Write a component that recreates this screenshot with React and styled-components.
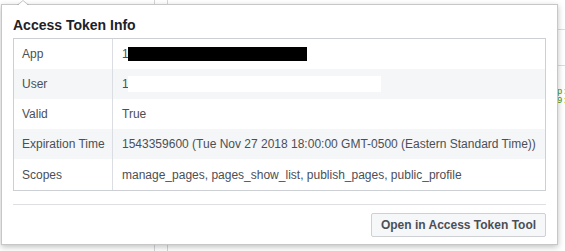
import React from 'react'
import styled, { createGlobalStyle } from 'styled-components'

const GlobalStyle = createGlobalStyle`
  html, body { margin: 0; padding: 0; background: #fff; }
  body { width: 565px; height: 251px; overflow: hidden; font-family: "Liberation Sans", Arial, sans-serif; }
`;

// background page, mostly hidden by the popover
const Page = styled.div`
  position: relative;
  display: flex;
  width: 565px;
  height: 251px;
`;
const Column = styled.div`
  width: ${p => p.$w}px;
  border-right: 1px solid #d3d6db;
  box-sizing: border-box;
`;
const Main = styled.div`flex: 1;`;
const Side = styled.div`
  width: 8px;
  display: flex;
  flex-direction: column;
  padding-top: 29px;
`;
const SideRow = styled.div`
  height: 35px;
  border-top: 1px solid #dadde1;
`;
const Code = styled.pre`
  margin: 0;
  padding-top: 22px;
  font-family: "Liberation Mono", monospace;
  font-size: 9px;
  line-height: 9px;
  color: #3c9a28;
`;

// popover
const Popover = styled.div`
  position: absolute;
  left: 1px;
  top: 4px;
  width: 557px;
  box-sizing: border-box;
  padding: 0 11px 7px;
  background: #fff;
  border: 1px solid rgba(0, 0, 0, 0.22);
  box-shadow: 0 2px 6px rgba(0, 0, 0, 0.25);

  &::before, &::after {
    content: "";
    position: absolute;
    left: 15px;
    border: 6px solid transparent;
    border-top: 0;
  }
  &::before { top: -5px; border-bottom: 5px solid rgba(0, 0, 0, 0.22); }
  &::after { top: -4px; border-bottom: 5px solid #fff; }
`;
const Title = styled.h2`
  margin: 0;
  padding: 11px 0 4px;
  font-size: 14px;
  line-height: 18px;
  font-weight: bold;
  color: #1d2129;
`;
const Table = styled.div`
  border: 1px solid #ccd0d5;
`;
const Row = styled.div`
  display: grid;
  grid-template-columns: 99px 1fr;
  height: ${p => p.$h || 30}px;
  background: ${p => (p.$shade ? '#f5f6f7' : '#fff')};
  font-size: 12px;
  color: #4b4f56;
`;
const Label = styled.div`
  display: flex;
  align-items: center;
  padding-left: 8px;
  border-right: 1px solid #dadde1;
`;
const Value = styled.div`
  display: flex;
  align-items: center;
  padding-left: 9px;
  white-space: nowrap;
`;
const Redact = styled.span`
  display: inline-block;
  width: ${p => p.$w}px;
  height: ${p => p.$h}px;
  margin-left: ${p => p.$ml}px;
  background: ${p => p.$c};
`;
const Footer = styled.div`
  margin-top: 13px;
  padding-top: 8px;
  border-top: 1px solid #dddfe2;
  display: flex;
  justify-content: flex-end;
`;
const Button = styled.button`
  height: 24px;
  width: 175px;
  padding: 0;
  border: 1px solid #ced0d4;
  border-radius: 2px;
  background: #f6f7f9;
  font-family: "Liberation Sans", Arial, sans-serif;
  font-size: 12px;
  font-weight: bold;
  color: #4b4f56;
`;

const rows = [
  { label: 'App', value: <>1<Redact $w={179} $h={14} $ml={-1} $c="#000" /></> },
  { label: 'User', value: <>1<Redact $w={253} $h={16} $ml={-1} $c="#fff" /></>, shade: true },
  { label: 'Valid', value: 'True' },
  { label: 'Expiration Time', value: '1543359600 (Tue Nov 27 2018 18:00:00 GMT-0500 (Eastern Standard Time))', shade: true },
  { label: 'Scopes', value: 'manage_pages, pages_show_list, publish_pages, public_profile', h: 31 },
];

export default function App() {
  return (
    <>
      <GlobalStyle />
      <Page>
        <Column $w={155} />
        <Column $w={13} />
        <Main />
        <Side>
          <SideRow />
          <SideRow>
            <Code>{'p:\n9:'}</Code>
          </SideRow>
        </Side>
        <Popover>
          <Title>Access Token Info</Title>
          <Table>
            {rows.map(r => (
              <Row key={r.label} $shade={r.shade} $h={r.h}>
                <Label>{r.label}</Label>
                <Value>{r.value}</Value>
              </Row>
            ))}
          </Table>
          <Footer>
            <Button>Open in Access Token Tool</Button>
          </Footer>
        </Popover>
      </Page>
    </>
  )
}
